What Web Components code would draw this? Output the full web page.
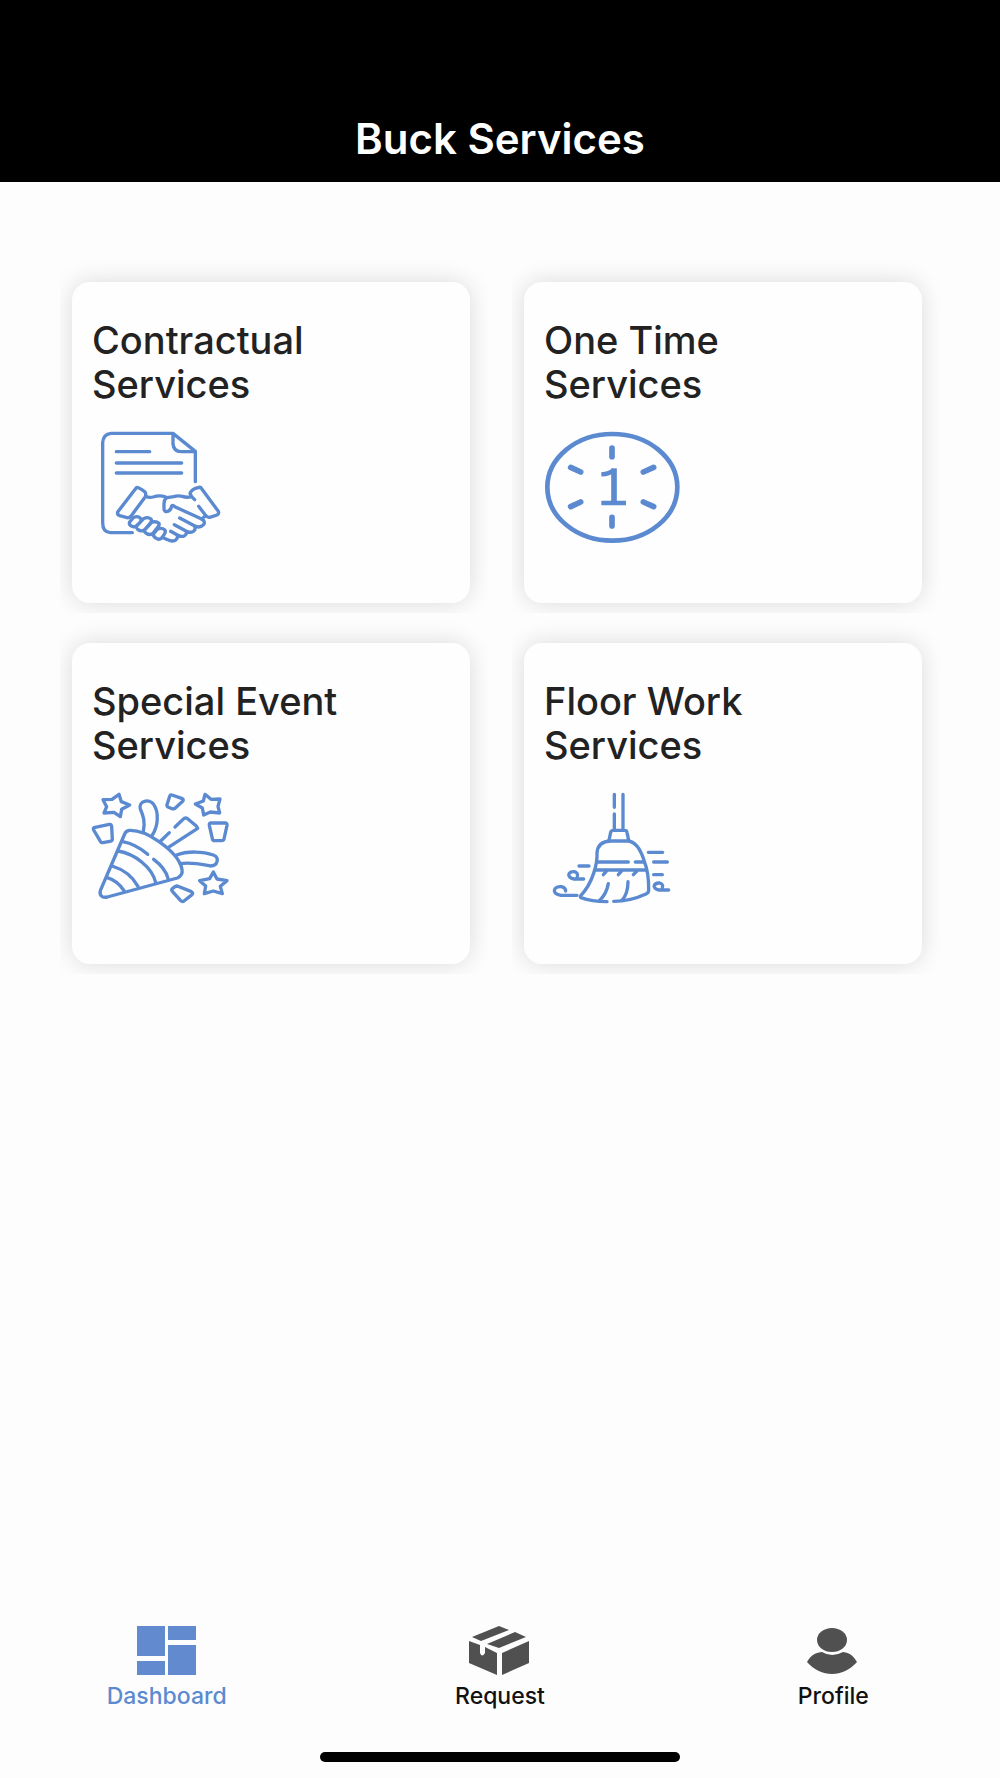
<!DOCTYPE html>
<html lang="en">
<head>
  <meta charset="utf-8">
  <meta name="viewport" content="width=device-width, initial-scale=1">
  <title>Buck Services</title>
  <style>
    body {
      margin: 0;
      background: #fdfdfd;
      font-family: Inter, "Liberation Sans", sans-serif;
      color: #222;
    }
  </style>
</head>
<body>
  <app-shell>
    <app-header slot="header">Buck Services</app-header>

    <service-card>
      Contractual Services
      <svg slot="icon" viewBox="21 30 408 342" aria-hidden="true">
        <path d="M142 338H76Q53 336 53 308V68Q55 42 78 40H264L331 94V185M264 40V72Q266 94 288 95H328M94 95H194M94 129H290M94 159H290"/>
        <path d="M154 203L98 276Q96 284 104 287L126 293Q134 294 139 287L181 230Q184 222 180 216Q172 208 160 203Q156 201 154 203Z"/>
        <path d="M182 229Q192 234 204 231C216 227 226 225 242 231M329 239L320 230L315 220Q317 213 329 206L342 202Q347 201 350 206L400 274Q403 281 396 285L374 292Q366 293 361 285L341 259"/>
        <path d="M318 230Q306 234 292 229Q278 226 266 230L246 233Q236 239 237 254V268Q238 276 248 274Q258 271 260 258Q264 254 271 261L350 297Q362 304 356 314Q344 326 328 317L284 294M328 318Q334 328 325 334Q315 340 303 333L268 314M303 333Q307 342 299 347Q288 352 277 345L257 334M276 345Q281 354 271 361Q260 366 248 359L236 354M358 290L350 298"/>
        <path d="M134 306L144 294Q153 287 163 292Q172 298 165 307L154 318Q145 323 137 317Q131 312 134 306ZM154 319L176 296Q188 289 198 297Q202 302 196 309L178 330Q168 336 158 328Q153 324 154 319ZM178 331L200 307Q212 302 222 310Q224 316 218 322L204 340Q194 347 184 340Q178 336 178 331ZM206 341L218 327Q230 322 240 330Q243 336 237 344L230 354Q222 361 212 354Q203 348 206 341Z"/>
      </svg>
    </service-card>

    <service-card>
      One Time Services
      <svg slot="icon" viewBox="42 30 408 342" aria-hidden="true">
        <ellipse cx="247" cy="202" rx="195" ry="160" stroke-width="14"/>
        <path stroke-width="17" d="M246 84V110M246 292V318M122 142L152 156M340 156L371 142M122 260L152 246M340 246L371 260"/>
        <path stroke-width="13" stroke-linecap="butt" d="M214 163Q238 162 252 150M214 249H288"/>
        <path stroke-width="17" stroke-linecap="butt" d="M252 145V250"/>
      </svg>
    </service-card>

    <service-card>
      Special Event Services
      <svg slot="icon" viewBox="36 33 408 342" aria-hidden="true">
        <path d="M117 43L124 65L149 75L125 88L121 110L102 97L72 99L80 80L69 59L96 58ZM375 43L393 58L420 57L414 79L419 99L391 96L371 105L367 84L346 72L370 63ZM400 276L411 297L441 302L421 319L427 341L400 333L373 341L377 318L359 302L389 296Z"/>
        <path d="M42 143L88 133Q94 132 95 140L97 177Q97 183 90 184L68 188Q62 188 60 182L41 150Q39 145 42 143ZM276 45L307 56Q312 59 308 64L286 84Q282 88 276 86L264 81Q260 79 261 74L269 49Q271 43 276 45ZM393 129H435Q442 129 441 136L432 177Q431 182 425 182H404Q398 182 397 176L388 136Q387 129 393 129ZM292 318L334 335Q341 339 336 344L312 363Q307 367 302 362L277 334Q273 329 278 325L286 319Z"/>
        <path d="M134 162L61 332Q58 345 67 350Q73 353 82 351L292 294Q309 287 306 268C300 235 269 207 236 184C209 165 174 150 148 151Q137 153 134 162Z"/>
        <path d="M128 185Q167 192 203 223M221 238Q256 264 264 295M114 213C166 222 216 262 227 307M96 258Q149 274 174 319M80 292Q113 302 132 332"/>
        <path d="M190 154C196 125 190 108 181 87C174 63 208 54 221 73C238 98 234 139 217 165M242 183L268 158M264 203L353 145L349 138L321 115Q315 112 309 118L285 141M288 226C322 212 370 214 400 225C420 233 413 258 391 258C364 253 334 246 301 251"/>
      </svg>
    </service-card>

    <service-card>
      Floor Work Services
      <svg slot="icon" viewBox="12 33 408 342" aria-hidden="true">
        <path d="M223 43V82M223 102V150M249 43V150M207 181L212 157Q214 151 220 151H254Q260 151 261 157L266 181"/>
        <path d="M201 365C171 365 144 361 123 353Q119 351 123 346C158 309 173 250 171 218Q174 184 212 183H261C288 183 303 211 313 244Q327 280 326 331Q326 339 318 342Q270 364 221 364"/>
        <path d="M172 246H265M286 246H313M166 270H320M190 284L200 273M235 284L245 273M280 284L291 273M205 311Q199 344 178 362M264 305Q264 340 246 361M325 217H368M341 246H382M341 284H367M117 258H147"/>
        <path d="M111 346H63C31 341 42 318 64 320Q77 323 77 333M131 297H102C77 292 85 273 103 275Q115 278 112 289M386 330H357C333 325 342 308 359 309Q371 313 367 322"/>
      </svg>
    </service-card>

    <nav-bar slot="footer">
      <nav-item href="#dashboard" current>
        <svg slot="icon" viewBox="0 0 62 50" aria-hidden="true">
          <path d="M1 0H29V30H1ZM32 0H60V14H32ZM1 35H29V49H1ZM32 19H60V49H32Z"/>
        </svg>
        Dashboard
      </nav-item>
      <nav-item href="#request">
        <svg slot="icon" viewBox="0 0 62 50" aria-hidden="true">
          <path d="M3 11L30 0L40 4L12 15ZM18 18L46 6L57 11L30 22ZM0 15L11 19V27Q13 32 16 27V21L28 27V49L0 37ZM33 27L60 15V37L33 49Z"/>
        </svg>
        Request
      </nav-item>
      <nav-item href="#profile">
        <svg slot="icon" viewBox="0 0 62 50" aria-hidden="true">
          <ellipse cx="30" cy="14" rx="15" ry="12"/>
          <path d="M20 26C11 27 8 31 5 36C19 52 41 52 55 36C52 31 49 27 41 26Q30 32 20 26Z"/>
        </svg>
        Profile
      </nav-item>
    </nav-bar>
  </app-shell>

  <script>
    class AppShell extends HTMLElement {
      constructor() {
        super();
        this.attachShadow({ mode: 'open' });
      }

      connectedCallback() {
        this.shadowRoot.innerHTML = `
          <style>
            :host {
              display: flex;
              flex-direction: column;
              min-height: 100vh;
            }

            main {
              flex: 1;
              display: grid;
              grid-template-columns: repeat(2, 1fr);
              align-content: start;
              gap: 40px 54px;
              padding: 100px 78px 40px 72px;
            }

            @media screen and (max-width: 700px) {
              main {
                grid-template-columns: 1fr;
                padding: 40px 24px;
              }
            }
          </style>
          <slot name="header"></slot>
          <main><slot></slot></main>
          <slot name="footer"></slot>
        `;
      }
    }

    class AppHeader extends HTMLElement {
      constructor() {
        super();
        this.attachShadow({ mode: 'open' });
      }

      connectedCallback() {
        this.shadowRoot.innerHTML = `
          <style>
            :host {
              display: block;
              padding: 115px 20px 19px;
              background: #000;
              color: #fff;
              text-align: center;
            }

            h1 {
              margin: 0;
              font-size: 42px;
              line-height: 48px;
              font-weight: 600;
            }
          </style>
          <h1><slot></slot></h1>
        `;
      }
    }

    class ServiceCard extends HTMLElement {
      constructor() {
        super();
        this.attachShadow({ mode: 'open' });
      }

      connectedCallback() {
        this.shadowRoot.innerHTML = `
          <style>
            :host {
              display: block;
              padding: 36px 20px 59px;
              border-radius: 18px;
              background: #fefefe;
              box-shadow: 0 0 24px rgba(0, 0, 0, 0.14);
              clip-path: inset(-24px -18px -10px -12px);
            }

            h2 {
              /* wraps every title before "Services" */
              max-width: 280px;
              margin: 0 0 24px;
              font-size: 38px;
              line-height: 44px;
              font-weight: 500;
            }

            ::slotted(svg) {
              display: block;
              width: 136px;
              height: 114px;
              overflow: visible;
              fill: none;
              stroke: #5b8ad0;
              stroke-width: 10px;
              stroke-linecap: round;
              stroke-linejoin: round;
            }
          </style>
          <h2><slot></slot></h2>
          <slot name="icon"></slot>
        `;
      }
    }

    class NavBar extends HTMLElement {
      constructor() {
        super();
        this.attachShadow({ mode: 'open' });
      }

      connectedCallback() {
        this.shadowRoot.innerHTML = `
          <style>
            :host {
              display: block;
              padding-bottom: 16px;
            }

            nav {
              display: grid;
              grid-template-columns: repeat(3, 1fr);
              margin-bottom: 42px;
            }

            .home-indicator {
              width: 36%;
              height: 10px;
              margin: 0 auto;
              border-radius: 5px;
              background: #000;
            }
          </style>
          <nav><slot></slot></nav>
          <div class="home-indicator"></div>
        `;
      }
    }

    class NavItem extends HTMLElement {
      constructor() {
        super();
        this.attachShadow({ mode: 'open' });
      }

      connectedCallback() {
        const current = this.hasAttribute('current') ? 'aria-current="page"' : '';
        this.shadowRoot.innerHTML = `
          <style>
            :host {
              display: flex;
              justify-content: center;
              color: #111;
              --icon-color: #505050;
            }

            :host([current]) {
              color: #5b8ad0;
              --icon-color: #628bcf;
            }

            a {
              display: flex;
              flex-direction: column;
              align-items: center;
              gap: 6px;
              color: inherit;
              font-size: 23px;
              line-height: 28px;
              font-weight: 500;
              text-decoration: none;
            }

            ::slotted(svg) {
              width: 62px;
              height: 50px;
              fill: var(--icon-color);
            }
          </style>
          <a href="${this.getAttribute('href')}" ${current}>
            <slot name="icon"></slot>
            <span><slot></slot></span>
          </a>
        `;
      }
    }

    customElements.define('app-shell', AppShell);
    customElements.define('app-header', AppHeader);
    customElements.define('service-card', ServiceCard);
    customElements.define('nav-bar', NavBar);
    customElements.define('nav-item', NavItem);
  </script>
</body>
</html>
